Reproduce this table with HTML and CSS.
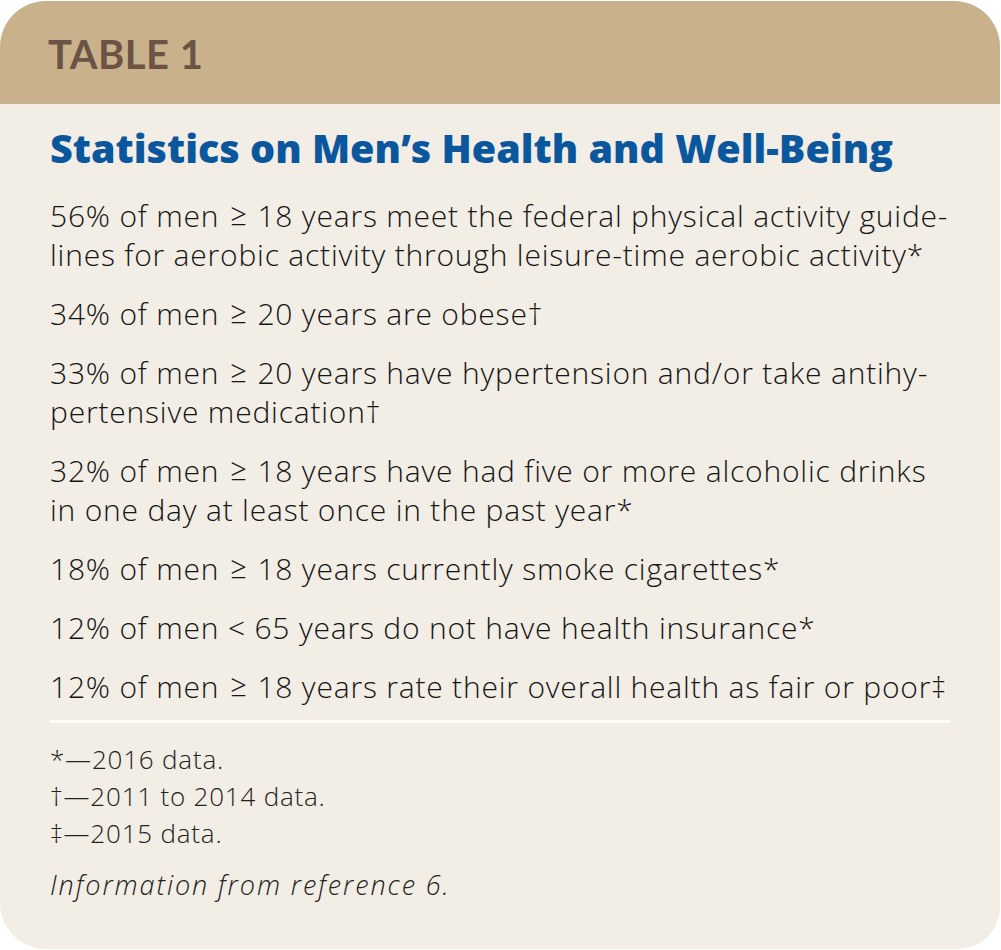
FILE: index.html
```html
<!DOCTYPE html>
<html lang="en">
<head>
<meta charset="utf-8">
<title>Table 1</title>
<link rel="stylesheet" href="styles.css">
</head>
<body>
<div class="card">
  <div class="card-head">
    <div class="label">TABLE 1</div>
  </div>
  <div class="card-body">
    <h1 class="title">Statistics on Men’s Health and Well-Being</h1>
    <ul class="stats">
      <li>56% of men <span class="ge">≥</span> 18 years meet the federal physical activity guide-<br>lines for aerobic activity through leisure-time aerobic activity*</li>
      <li>34% of men <span class="ge">≥</span> 20 years are obese†</li>
      <li>33% of men <span class="ge">≥</span> 20 years have hypertension and/or take antihy-<br>pertensive medication†</li>
      <li>32% of men <span class="ge">≥</span> 18 years have had five or more alcoholic drinks<br>in one day at least once in the past year*</li>
      <li>18% of men <span class="ge">≥</span> 18 years currently smoke cigarettes*</li>
      <li>12% of men &lt; 65 years do not have health insurance*</li>
      <li>12% of men <span class="ge">≥</span> 18 years rate their overall health as fair or poor‡</li>
    </ul>
    <div class="rule"></div>
    <ul class="notes">
      <li>*—2016 data.</li>
      <li>†—2011 to 2014 data.</li>
      <li>‡—2015 data.</li>
    </ul>
    <p class="source">Information from reference 6.</p>
  </div>
</div>
</body>
</html>
```

FILE: styles.css
```css
html, body {
  margin: 0;
  padding: 0;
  background: #ffffff;
}
body {
  width: 1001px;
  height: 950px;
  overflow: hidden;
}
.card {
  width: 1000px;
  height: 948px;
  margin-top: 1px;
  border-radius: 46px 46px 42px 46px;
  overflow: hidden;
  background: #f2ede5;
  display: flex;
  flex-direction: column;
}
.card-head {
  height: 103px;
  background: #c9b28b;
  display: flex;
  align-items: center;
  padding-left: 48px;
  box-sizing: border-box;
}
.label {
  font-family: Lato, "Liberation Sans", sans-serif;
  font-weight: 700;
  font-size: 40px;
  color: #6b5445;
  letter-spacing: 0.5px;
  padding-top: 2px;
}
.card-body {
  padding: 20px 50px 0 50px;
}
.title {
  margin: 0 0 24px 0;
  font-family: "Open Sans", "Liberation Sans", sans-serif;
  font-weight: 800;
  font-size: 39.5px;
  line-height: 48px;
  color: #0b579e;
}
.stats, .notes {
  list-style: none;
  margin: 0;
  padding: 0;
}
.stats {
  font-family: "Open Sans", "Liberation Sans", sans-serif;
  font-weight: 300;
  font-size: 30px;
  letter-spacing: 0.8px;
  line-height: 39px;
  color: #151515;
  display: flex;
  flex-direction: column;
  gap: 20px;
}
.ge {
  font-family: Lato, "Liberation Sans", sans-serif;
  font-weight: 300;
  font-size: 36px;
  line-height: 0;
  letter-spacing: 0;
}
.rule {
  height: 3px;
  background: #ffffff;
  margin: 14px 0 18px 0;
}
.notes {
  font-family: "Open Sans", "Liberation Sans", sans-serif;
  font-weight: 300;
  font-size: 26px;
  letter-spacing: 0.8px;
  line-height: 37px;
  color: #222222;
}
.source {
  margin: 14px 0 0 0;
  font-family: "Open Sans", "Liberation Sans", sans-serif;
  font-weight: 300;
  font-style: italic;
  font-size: 27px;
  letter-spacing: 1.9px;
  line-height: 37px;
  color: #222222;
}
```
